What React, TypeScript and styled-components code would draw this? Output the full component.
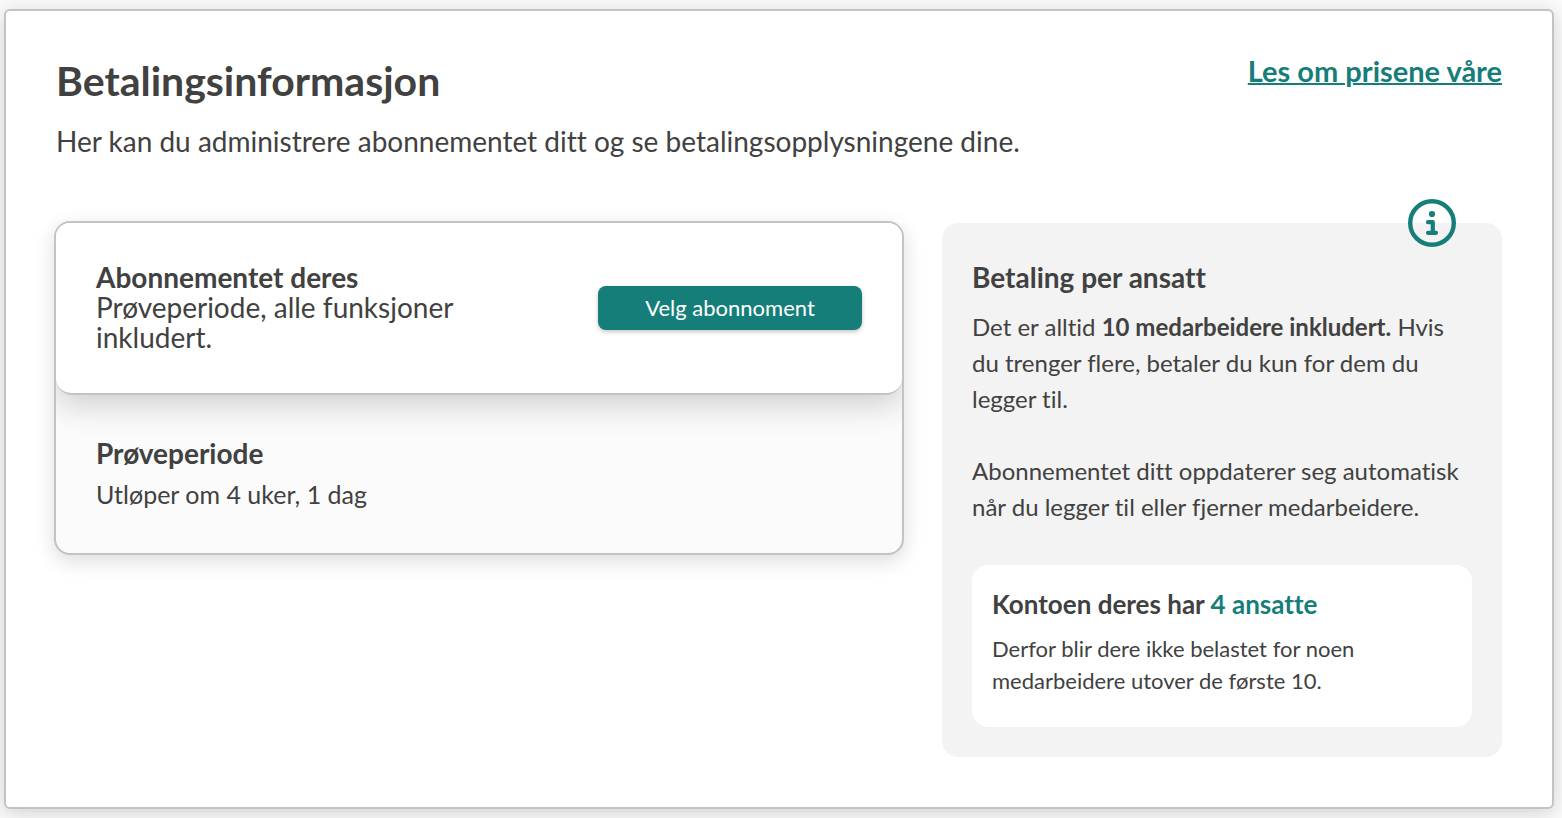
import React from "react";
import styled, { createGlobalStyle } from "styled-components";

const teal = "#167e79";
const ink = "#414141";
const line = "#c3c3c3";

const GlobalStyle = createGlobalStyle`
  *, *::before, *::after { box-sizing: border-box; }
  body {
    margin: 0;
    background: #fafafa;
    color: ${ink};
    font-family: Lato, "Liberation Sans", sans-serif;
    font-variant-ligatures: none;
  }
  h1, h2, h3, p { margin: 0; }
`;

const Page = styled.main`
  padding: 9px 8px 9px 4px;
`;

const Panel = styled.section`
  padding: 46px 50px 50px 48px;
  background: #fff;
  border: 2px solid ${line};
  border-radius: 6px;
  box-shadow: 0 4px 20px rgba(0, 0, 0, 0.16);
`;

const Header = styled.header`
  display: flex;
  justify-content: space-between;
  align-items: flex-start;
  padding-left: 2px;
`;

const Title = styled.h1`
  font-size: 41px;
  line-height: 48px;
  font-weight: 700;
`;

const Lead = styled.p`
  margin-top: 18px;
  font-size: 28px;
  line-height: 36px;
`;

const PriceLink = styled.a`
  flex: none;
  font-size: 29px;
  line-height: 28px;
  font-weight: 700;
  color: ${teal};
  text-decoration: underline;
  text-decoration-thickness: 2px;
`;

const Columns = styled.div`
  display: grid;
  grid-template-columns: minmax(0, 1fr) 560px;
  gap: 38px;
  align-items: start;
  margin-top: 62px;
`;

const Subscription = styled.div`
  overflow: hidden;
  background: #fbfbfb;
  border: 2px solid ${line};
  border-radius: 16px;
  box-shadow: 0 6px 20px rgba(0, 0, 0, 0.14);
`;

const PlanCard = styled.section`
  display: flex;
  align-items: center;
  justify-content: space-between;
  gap: 40px;
  padding: 39px 40px 41px;
  background: #fff;
  border-bottom: 2px solid ${line};
  border-radius: 0 0 16px 16px;
  box-shadow: 0 10px 32px rgba(0, 0, 0, 0.18);
`;

const PlanText = styled.div`
  max-width: 400px;
`;

const CardTitle = styled.h2`
  font-size: 28px;
  line-height: 30px;
  font-weight: 700;
`;

const PlanDescription = styled.p`
  font-size: 28px;
  line-height: 30px;
`;

const PrimaryButton = styled.button`
  flex: none;
  width: 264px;
  height: 44px;
  margin-top: 2px;
  padding: 0;
  border: 0;
  border-radius: 8px;
  background: ${teal};
  color: #fff;
  font-family: inherit;
  font-size: 22px;
  line-height: 28px;
  box-shadow: 0 2px 4px rgba(0, 0, 0, 0.22);
  cursor: pointer;
`;

const Trial = styled.section`
  padding: 43px 40px;
`;

const TrialText = styled.p`
  margin-top: 10px;
  font-size: 25px;
  line-height: 32px;
`;

const Info = styled.aside`
  position: relative;
  margin-top: 2px;
  padding: 39px 30px 30px;
  background: #f3f3f3;
  border-radius: 16px;
`;

const InfoIcon = styled.svg`
  position: absolute;
  top: -24px;
  right: 46px;
  width: 48px;
  height: 48px;
`;

const InfoText = styled.p`
  margin-top: 17px;
  font-size: 24px;
  line-height: 36px;

  & + & {
    margin-top: 36px;
  }
`;

const Account = styled.section`
  margin-top: 40px;
  padding: 23px 20px 30px;
  background: #fff;
  border-radius: 16px;
`;

const AccountTitle = styled.h3`
  font-size: 26px;
  line-height: 32px;
  font-weight: 700;

  span {
    color: ${teal};
  }
`;

const AccountText = styled.p`
  margin-top: 13px;
  font-size: 22px;
  line-height: 32px;
`;

export default function App() {
  return (
    <>
      <GlobalStyle />
      <Page>
        <Panel>
          <Header>
            <div>
              <Title>Betalingsinformasjon</Title>
              <Lead>
                Her kan du administrere abonnementet ditt og se betalingsopplysningene dine.
              </Lead>
            </div>
            <PriceLink href="#priser">Les om prisene våre</PriceLink>
          </Header>
          <Columns>
            <Subscription>
              <PlanCard>
                <PlanText>
                  <CardTitle>Abonnementet deres</CardTitle>
                  <PlanDescription>Prøveperiode, alle funksjoner inkludert.</PlanDescription>
                </PlanText>
                <PrimaryButton type="button">Velg abonnoment</PrimaryButton>
              </PlanCard>
              <Trial>
                <CardTitle>Prøveperiode</CardTitle>
                <TrialText>Utløper om 4 uker, 1 dag</TrialText>
              </Trial>
            </Subscription>
            <Info>
              <InfoIcon viewBox="0 0 48 48" aria-hidden="true" fill="none" stroke={teal}>
                <circle cx="24" cy="24" r="21.8" strokeWidth="4.4" />
                <circle cx="24" cy="15" r="3.1" fill={teal} stroke="none" />
                <path
                  d="M20 23.2H24.8V33.8M20 33.8H28"
                  strokeWidth="4.2"
                  strokeLinecap="round"
                  strokeLinejoin="round"
                />
              </InfoIcon>
              <CardTitle>Betaling per ansatt</CardTitle>
              <InfoText>
                Det er alltid <strong>10 medarbeidere inkludert.</strong> Hvis du trenger flere,
                betaler du kun for dem du legger til.
              </InfoText>
              <InfoText>
                Abonnementet ditt oppdaterer seg automatisk når du legger til eller fjerner
                medarbeidere.
              </InfoText>
              <Account>
                <AccountTitle>
                  Kontoen deres har <span>4 ansatte</span>
                </AccountTitle>
                <AccountText>
                  Derfor blir dere ikke belastet for noen medarbeidere utover de første 10.
                </AccountText>
              </Account>
            </Info>
          </Columns>
        </Panel>
      </Page>
    </>
  );
}
